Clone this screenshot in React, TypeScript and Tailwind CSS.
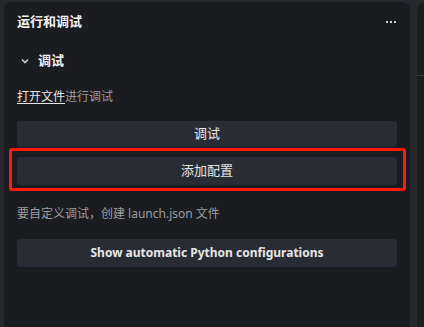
import React from "react";

const font = { fontFamily: '"Noto Sans", "Noto Sans CJK SC", sans-serif' };

export default function App() {
  return (
    <div
      className="relative flex h-[327px] w-[424px] overflow-hidden bg-[#27282d] pl-[4px] pt-[2px]"
      style={font}
    >
      <div className="flex h-[340px] w-[406px] shrink-0 flex-col rounded-t-[8px] bg-[#1b1c20] px-[13px]">
        <div className="flex h-[40px] items-center justify-between">
          <span className="text-[13px] font-bold text-[#f2f2f2]">运行和调试</span>
          <span className="mr-[1px] flex gap-[2px]">
            <span className="h-[2px] w-[2px] bg-[#d0d0d0]" />
            <span className="h-[2px] w-[2px] bg-[#d0d0d0]" />
            <span className="h-[2px] w-[2px] bg-[#d0d0d0]" />
          </span>
        </div>
        <div className="flex h-[38px] items-center gap-[8px] pl-[3px]">
          <svg width="10" height="10" viewBox="0 0 10 10" className="text-[#c8c8c8]">
            <path d="M2 3.5 L5 6.5 L8 3.5" fill="none" stroke="currentColor" strokeWidth="1.6" />
          </svg>
          <span className="text-[13px] font-bold text-[#f2f2f2]">调试</span>
        </div>
        <div className="flex h-[34px] items-center text-[12px]">
          <span className="text-[#e6e6e6] underline underline-offset-2">打开文件</span>
          <span className="text-[#9a9ba0]">进行调试</span>
        </div>
        <button className="mt-[7px] flex h-[26px] w-[380px] items-center justify-center rounded-[3px] bg-[#2a2c35] text-[13px] text-[#e6e6e6]">
          调试
        </button>
        <button className="mt-[10px] flex h-[28px] w-[380px] items-center justify-center rounded-[3px] bg-[#2a2c35] text-[13px] text-[#e6e6e6]">
          添加配置
        </button>
        <div className="mt-[19px] flex h-[20px] items-center text-[12px] text-[#9a9ba0]">
          要自定义调试，创建 launch.json 文件
        </div>
        <button className="mt-[15px] flex h-[28px] w-[380px] items-center justify-center rounded-[3px] bg-[#2a2c35] text-[12px] font-bold text-[#e6e6e6]">
          Show automatic Python configurations
        </button>
      </div>
      <div className="ml-[7px] flex h-[340px] w-[20px] shrink-0 flex-col rounded-t-[8px] bg-[#1d1e22]">
        <div className="h-[74px] border-b border-[#3a3b42]" />
      </div>
      <div className="pointer-events-none absolute left-[9px] top-[148px] h-[43px] w-[397px] rounded-[3px] border-[3px] border-[#ff1a0d]" />
    </div>
  );
}
